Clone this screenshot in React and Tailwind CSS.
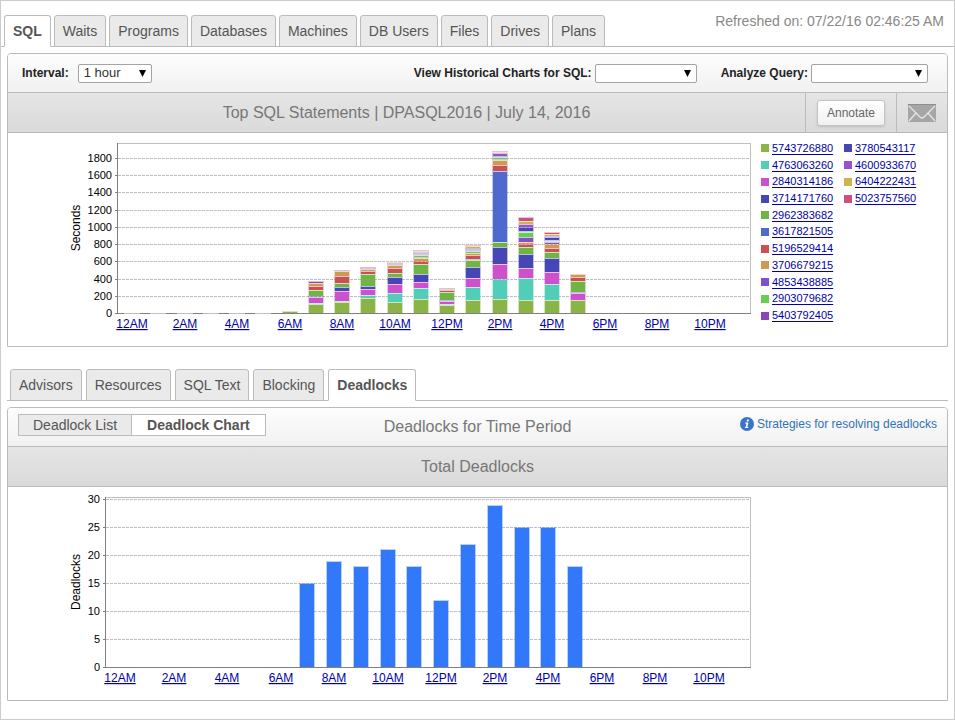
import React, { useState } from 'react'
import clsx from 'clsx'

const mainTabs = ['SQL', 'Waits', 'Programs', 'Databases', 'Machines', 'DB Users', 'Files', 'Drives', 'Plans']
const detailTabs = ['Advisors', 'Resources', 'SQL Text', 'Blocking', 'Deadlocks']

const statements = [
	{ id: '5743726880', color: '#8ab446' },
	{ id: '4763063260', color: '#52cdb7' },
	{ id: '2840314186', color: '#cd50cd' },
	{ id: '3714171760', color: '#4646b4' },
	{ id: '2962383682', color: '#70b446' },
	{ id: '3617821505', color: '#5069cd' },
	{ id: '5196529414', color: '#cd5050' },
	{ id: '3706679215', color: '#cd9b50' },
	{ id: '4853438885', color: '#8250cd' },
	{ id: '2903079682', color: '#69cd50' },
	{ id: '5403792405', color: '#8c46b4' },
	{ id: '3780543117', color: '#4646b4' },
	{ id: '4600933670', color: '#9b50cd' },
	{ id: '6404222431', color: '#cdb450' },
	{ id: '5023757560', color: '#cd5082' },
]

// hour -> [statement index, seconds], bottom of the stack first
const waitsByHour = {
	6: [[0, 25]],
	7: [[0, 104], [1, 12], [2, 70], [3, 12], [4, 70], [6, 46], [7, 35], [10, 23]],
	8: [[0, 128], [1, 12], [2, 116], [3, 46], [4, 46], [6, 81], [7, 58], [8, 12]],
	9: [[0, 174], [1, 35], [2, 70], [3, 35], [4, 139], [6, 35], [7, 23], [8, 12], [10, 12]],
	10: [[0, 128], [1, 104], [2, 104], [3, 81], [4, 46], [6, 58], [7, 35], [8, 12], [10, 12], [13, 12]],
	11: [[0, 162], [1, 128], [2, 70], [3, 93], [4, 116], [6, 35], [7, 35], [8, 12], [9, 23], [8, 12], [10, 12], [12, 12], [13, 12], [14, 12]],
	12: [[0, 93], [1, 12], [2, 35], [3, 12], [4, 93], [6, 23], [7, 12], [10, 12]],
	13: [[0, 151], [1, 151], [2, 104], [3, 128], [4, 81], [5, 12], [6, 46], [7, 23], [9, 23], [8, 12], [10, 12], [11, 12], [13, 23], [14, 12]],
	14: [[0, 162], [1, 232], [2, 174], [3, 197], [4, 58], [5, 824], [6, 70], [7, 58], [8, 12], [9, 23], [11, 12], [12, 35], [13, 12], [14, 12]],
	15: [[0, 151], [1, 255], [2, 116], [3, 162], [4, 81], [6, 35], [7, 23], [8, 58], [9, 58], [10, 12], [11, 46], [12, 35], [13, 35], [14, 46]],
	16: [[0, 151], [1, 186], [2, 139], [3, 162], [4, 70], [6, 46], [7, 46], [8, 23], [9, 12], [10, 12], [11, 35], [12, 12], [13, 23], [14, 23]],
	17: [[0, 151], [2, 81], [3, 12], [4, 128], [6, 46], [7, 35]],
}

const deadlocksByHour = { 7: 15, 8: 19, 9: 18, 10: 21, 11: 18, 12: 12, 13: 22, 14: 29, 15: 25, 16: 25, 17: 18 }

const hourLabels = ['12AM', '2AM', '4AM', '6AM', '8AM', '10AM', '12PM', '2PM', '4PM', '6PM', '8PM', '10PM']

const TOP = 10
const BASE = 180
const RIGHT = 742
const BAR = 16

function Tabs({ tabs, active, onSelect }) {
	return tabs.map((tab) => (
		<button
			key={tab}
			type="button"
			onClick={() => onSelect(tab)}
			className={clsx(
				'h-8 rounded-t-[3px] border px-2 text-sm whitespace-nowrap text-[#555]',
				tab === active
					? 'border-[#bbb] border-b-white bg-white font-bold'
					: 'border-[#bbb] bg-[#eaeaea]'
			)}
		>
			{tab}
		</button>
	))
}

function SelectBox({ label, id, options, gap, width }) {
	return (
		<div className={clsx('flex items-center text-xs font-bold text-[#222]', gap)}>
			<label htmlFor={id} className="whitespace-nowrap">{label}</label>
			<div className={clsx('relative', width)}>
				<select
					id={id}
					className="block h-[19px] w-full appearance-none rounded-[2px] border border-[#a3a3a3] bg-white pl-[5px] text-[13px] leading-4 font-normal text-[#333]"
				>
					{options.map((o) => <option key={o}>{o}</option>)}
				</select>
				<svg className="pointer-events-none absolute top-1.5 right-1.5" width="7" height="7" viewBox="0 0 7 7">
					<path d="M0 0h7L3.5 7z" fill="#000" />
				</svg>
			</div>
		</div>
	)
}

function Bar({ x, y, height, color }) {
	return (
		<>
			<rect x={x} y={y} width={BAR} height={height} fill={color} opacity="0.35" />
			<rect x={x + 1} y={y + 1} width={BAR - 2} height={Math.max(height - 1, 0)} fill={color} />
		</>
	)
}

function Chart({ title, left, ticks, tickLabels, first, step, idleHours = [], children }) {
	return (
		<svg width="752" height="213" viewBox="0 0 752 213" className="shrink-0" role="img" aria-label={title}>
			<g shapeRendering="crispEdges">
				{ticks.slice(1).map((y) => (
					<line key={y} x1={left + 1} x2={RIGHT} y1={y + 0.5} y2={y + 0.5} stroke="#c0c0c0" strokeDasharray="3 1" />
				))}
				<path d={`M${left} ${TOP + 0.5}H${RIGHT + 0.5}V${BASE}`} fill="none" stroke="#c0c0c0" />
				{children}
				<path d={`M${left + 0.5} ${TOP}V${BASE + 0.5}H${RIGHT + 1}`} fill="none" stroke="#808080" />
				{idleHours.map((hour) => (
					<rect key={hour} x={Math.round(first + hour * step) - BAR / 2} y={BASE} width={BAR} height="1" fill="#c0c0c0" />
				))}
				{ticks.map((y) => (
					<line key={y} x1={left - 2} x2={left} y1={y + 0.5} y2={y + 0.5} stroke="#808080" />
				))}
			</g>
			<g fontSize="11" textAnchor="end" fill="#000">
				{ticks.map((y, i) => (
					<text key={y} x={left - 5} y={y + 4}>{tickLabels[i]}</text>
				))}
			</g>
			<text transform="translate(72 95) rotate(-90)" fontSize="12" textAnchor="middle" fill="#000">{title}</text>
			<g fontSize="12" textAnchor="middle" fill="#0000aa">
				{hourLabels.map((label, i) => (
					<a key={label} href="#">
						<text className="underline underline-offset-2" x={Math.round(first + i * 2 * step)} y="195">{label}</text>
					</a>
				))}
			</g>
		</svg>
	)
}

function StatementsChart() {
	const scale = 155 / 1800
	const values = [0, 200, 400, 600, 800, 1000, 1200, 1400, 1600, 1800]
	const ticks = values.map((v) => Math.round(BASE - v * scale))
	const first = 124
	const step = 26.25

	return (
		<Chart title="Seconds" left={109} ticks={ticks} tickLabels={values} first={first} step={step} idleHours={[0, 1, 2, 3, 4, 5]}>
			{Object.entries(waitsByHour).map(([hour, stack]) => {
				const x = Math.round(first + hour * step) - BAR / 2
				let total = 0
				return stack.map(([index, seconds], i) => {
					const bottom = Math.round(total * scale)
					total += seconds
					const top = Math.round(total * scale)
					return <Bar key={`${hour}-${i}`} x={x} y={BASE - top} height={top - bottom} color={statements[index].color} />
				})
			})}
		</Chart>
	)
}

function DeadlocksChart() {
	const scale = 168 / 30
	const values = [0, 5, 10, 15, 20, 25, 30]
	const first = 112
	const step = 26.77

	return (
		<Chart title="Deadlocks" left={97} ticks={values.map((v) => BASE - v * scale)} tickLabels={values} first={first} step={step}>
			{Object.entries(deadlocksByHour).map(([hour, count]) => {
				const height = Math.round(count * scale)
				return <Bar key={hour} x={Math.round(first + hour * step) - BAR / 2} y={BASE - height} height={height} color="#3278fa" />
			})}
		</Chart>
	)
}

function Legend() {
	return (
		<ul className="mt-[7px] ml-px grid h-[184px] grid-flow-col grid-cols-[83px_83px] grid-rows-11 text-[11px] leading-none">
			{statements.map((s) => (
				<li key={s.id} className="flex items-center gap-[3px]">
					<span className="size-2 shrink-0" style={{ backgroundColor: s.color }} />
					<a href="#" className="text-[#0000aa] underline underline-offset-2">{s.id}</a>
				</li>
			))}
		</ul>
	)
}

function App() {
	const [tab, setTab] = useState('SQL')
	const [detail, setDetail] = useState('Deadlocks')

	return (
		<div className="border border-[#ccc] bg-white pb-[18px] font-['Liberation_Sans',Arial,sans-serif]">
			<header className="flex h-[46px] items-end border-b border-[#bbb] pl-[3px]">
				<nav className="-mb-px flex gap-[3px]">
					<Tabs tabs={mainTabs} active={tab} onSelect={setTab} />
				</nav>
				<p className="ml-auto self-start pt-2.5 pr-2.5 text-sm whitespace-nowrap text-[#888]">Refreshed on: 07/22/16 02:46:25 AM</p>
			</header>

			<main className="px-1.5">
				<section className="mt-1.5 rounded-t-[4px] border border-[#bbb]">
					<div className="flex h-[39px] items-center rounded-t-[3px] border-b border-[#bbb] bg-linear-to-b from-[#fdfdfd] to-[#f1f1f1] pr-[19px] pl-3.5">
						<SelectBox id="interval" label="Interval:" options={['1 hour', '10 minutes', '1 day']} gap="gap-[9px]" width="w-[74px]" />
						<div className="ml-auto flex gap-6">
							<SelectBox id="historical" label="View Historical Charts for SQL:" options={['']} gap="gap-[3px]" width="w-[102px]" />
							<SelectBox id="analyze" label="Analyze Query:" options={['']} gap="gap-[3px]" width="w-[117px]" />
						</div>
					</div>
					<div className="flex h-10 items-stretch border-b border-[#bbb] bg-linear-to-b from-[#e5e5e5] to-[#dadada]">
						<h2 className="grow self-center text-center text-base text-[#777]">Top SQL Statements | DPASQL2016 | July 14, 2016</h2>
						<div className="flex items-center border-l border-[#bbb] px-[11px]">
							<button type="button" className="h-[26px] rounded-[3px] border border-[#c4c4c4] bg-linear-to-b from-white to-[#f1f1f1] px-[9px] text-xs text-[#666] shadow-sm">Annotate</button>
						</div>
						<button type="button" aria-label="Email" className="flex w-[51px] items-center justify-center border-l border-[#bbb]">
							<svg width="28" height="18" viewBox="0 0 28 18">
								<rect width="28" height="18" rx="1" fill="#a6a6a6" />
								<path d="M0 .5h28" stroke="#8e8e8e" />
								<path d="M1 2l11 11q2 2 4 0L27 2M1 17l7-8M27 17l-7-8" fill="none" stroke="#e6e6e6" strokeWidth="1.3" />
							</svg>
						</button>
					</div>
					<div className="flex">
						<StatementsChart />
						<Legend />
					</div>
				</section>

				<nav className="mt-[22px] flex h-8 gap-1 border-b border-[#bbb] pl-[3px]">
					<Tabs tabs={detailTabs} active={detail} onSelect={setDetail} />
				</nav>

				<section className="mt-1.5 rounded-t-[4px] border border-[#bbb]">
					<div className="grid h-[39px] grid-cols-[1fr_auto_1fr] items-center rounded-t-[3px] border-b border-[#bbb] bg-linear-to-b from-[#fdfdfd] to-[#f1f1f1] px-2.5">
						<div className="flex self-start pt-1.5 text-sm text-[#555]">
							<button type="button" className="h-[22px] border border-[#bbb] bg-[#eaeaea] px-3.5 whitespace-nowrap">Deadlock List</button>
							<button type="button" className="h-[22px] border border-l-0 border-[#bbb] bg-white px-[15px] font-bold whitespace-nowrap">Deadlock Chart</button>
						</div>
						<h2 className="text-base text-[#777]">Deadlocks for Time Period</h2>
						<a href="#" className="flex items-center gap-[3px] self-start justify-self-end pt-2 text-xs whitespace-nowrap text-[#3272b4]">
							<svg width="14" height="14" viewBox="0 0 14 14">
								<circle cx="7" cy="7" r="7" fill="#3b73cb" />
								<path d="M7 2.5h2l-.4 2h-2zM5.2 5.5h3.2l-1 4.5h1l-.2 1H4.8l.2-1h.7l.7-3.5h-1.4z" fill="#fff" />
							</svg>
							Strategies for resolving deadlocks
						</a>
					</div>
					<h3 className="flex h-10 items-center justify-center border-b border-[#bbb] bg-linear-to-b from-[#e5e5e5] to-[#dadada] text-base text-[#777]">Total Deadlocks</h3>
					<DeadlocksChart />
				</section>
			</main>
		</div>
	)
}

export default App
